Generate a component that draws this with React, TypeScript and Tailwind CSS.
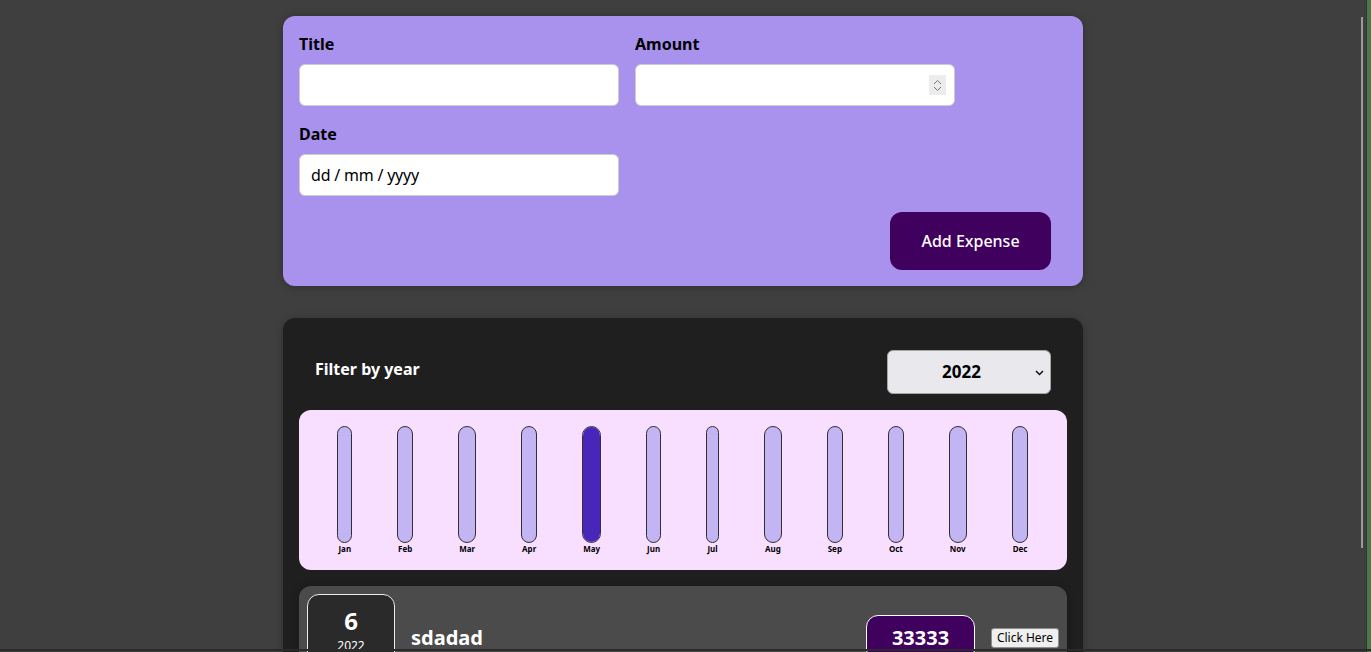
import React from "react";

const months = ["Jan", "Feb", "Mar", "Apr", "May", "Jun", "Jul", "Aug", "Sep", "Oct", "Nov", "Dec"];
const values = [0, 0, 0, 0, 100, 0, 0, 0, 0, 0, 0, 0];

function ChartBar({ label, pct }: { label: string; pct: number }) {
  return (
    <div className="flex h-full flex-col items-center">
      <div className="flex h-full w-full min-w-[13px] flex-col justify-end overflow-hidden rounded-[12px] border border-[#313131] bg-[#c3b4f3]">
        <div className="w-full bg-[#4826b9]" style={{ height: `${pct}%` }} />
      </div>
      <div className="px-[1px] text-center text-[8px] font-bold leading-[11px] text-black">{label}</div>
    </div>
  );
}

export default function App() {
  return (
    <div
      className="relative flex h-[652px] w-full overflow-hidden bg-[#3f3f3f]"
      style={{ fontFamily: '"Noto Sans", sans-serif' }}
    >
      <div className="relative flex-1">
        <div className="mx-auto w-[800px] pt-4">
          {/* New expense form */}
          <div className="rounded-[12px] bg-[#a892ee] p-4 shadow-[0_1px_8px_rgba(0,0,0,0.25)]">
            <div className="mb-4 flex flex-wrap gap-4 text-left">
              <div className="w-[320px]">
                <div className="mb-2 pt-[1px] text-[16px] font-bold leading-[23px] text-black">Title</div>
                <div className="h-[42px] w-[320px] rounded-[6px] border border-[#ccc] bg-white" />
              </div>
              <div className="w-[320px]">
                <div className="mb-2 pt-[1px] text-[16px] font-bold leading-[23px] text-black">Amount</div>
                <div className="flex h-[42px] w-[320px] items-center justify-end rounded-[6px] border border-[#ccc] bg-white pr-[8px]">
                  <div className="flex h-[20px] w-[17px] flex-col items-center justify-center gap-[1px] bg-[#ececec]">
                    <svg width="9" height="6" viewBox="0 0 9 6" fill="none" stroke="#777" strokeWidth="1">
                      <path d="M1 5 L4.5 1.5 L8 5" />
                    </svg>
                    <svg width="9" height="6" viewBox="0 0 9 6" fill="none" stroke="#777" strokeWidth="1">
                      <path d="M1 1 L4.5 4.5 L8 1" />
                    </svg>
                  </div>
                </div>
              </div>
              <div className="w-[320px]">
                <div className="mb-2 pt-[1px] text-[16px] font-bold leading-[23px] text-black">Date</div>
                <div className="flex h-[42px] w-[320px] items-center rounded-[6px] border border-[#ccc] bg-white pl-[11px] text-[16px] tracking-[-0.2px] text-black">
                  dd / mm / yyyy
                </div>
              </div>
            </div>
            <div className="flex justify-end pr-4">
              <button className="flex h-[58px] w-[161px] items-center justify-center rounded-[12px] bg-[#40005d] text-[16px] font-medium text-white">
                Add Expense
              </button>
            </div>
          </div>

          {/* Expenses */}
          <div className="mt-8 rounded-[12px] bg-[#1f1f1f] p-4 shadow-[0_1px_8px_rgba(0,0,0,0.25)]">
            <div className="my-4 flex items-center justify-between px-4 text-white">
              <div className="mb-[6px] text-[16px] font-bold">Filter by year</div>
              <div className="relative flex h-[44px] w-[164px] items-center rounded-[6px] border border-[#a5a5a5] bg-[#e9e9ed] pl-[54px] text-[17px] font-bold text-black">
                2022
                <svg className="absolute right-[6px] top-[19px]" width="9" height="6" viewBox="0 0 9 6" fill="none" stroke="#111" strokeWidth="1.5">
                  <path d="M1 1 L4.5 4.5 L8 1" />
                </svg>
              </div>
            </div>

            <div className="flex h-[160px] justify-around rounded-[12px] bg-[#f8dfff] p-4">
              {months.map((m, i) => (
                <ChartBar key={m} label={m} pct={values[i]} />
              ))}
            </div>

            <div className="my-4 flex items-center justify-between rounded-[12px] bg-[#4b4b4b] p-2 shadow-[0_1px_8px_rgba(0,0,0,0.25)]">
              <div className="flex h-[88px] w-[88px] flex-col items-center justify-start rounded-[12px] border border-[#ececec] bg-[#2a2a2a] pt-[9px] text-white">
                <div className="text-[24px] font-bold leading-[34px]">6</div>
                <div className="text-[12px] leading-[16px]">2022</div>
                <div className="text-[12px] font-bold leading-[16px]">May</div>
              </div>
              <div className="mx-4 flex-1 text-[20px] font-bold text-white">sdadad</div>
              <div className="flex h-[46px] w-[109px] items-center justify-center rounded-[12px] border border-white bg-[#40005d] text-[20px] font-bold text-white">
                33333
              </div>
              <button className="ml-4 flex h-[20px] w-[68px] items-center justify-center rounded-[3px] border border-[#8f8f8f] bg-[#efefef] text-[12px] text-black">
                Click Here
              </button>
            </div>
          </div>
        </div>

        {/* overlay scrollbar thumb */}
        <div className="absolute right-[3px] top-[17px] h-[531px] w-[2px] bg-[#9a9a9a]" />
      </div>
      <div className="w-[5px] border-l border-[#2f3a2f] bg-[#4a7a4a]" />
      {/* bottom edge line */}
      <div className="absolute bottom-[1px] left-0 h-[2px] w-full bg-[#2a2a2a]" />
    </div>
  );
}
